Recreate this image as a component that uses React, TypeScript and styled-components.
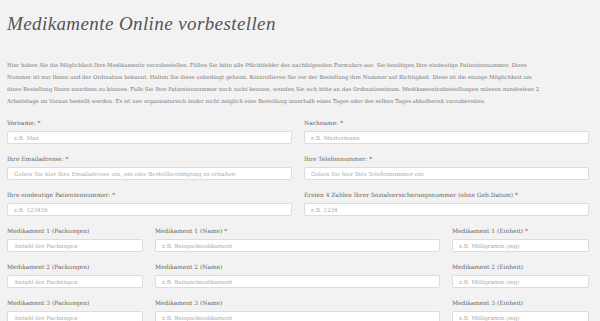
import * as React from 'react'
import styled, { createGlobalStyle } from 'styled-components'

const GlobalStyle = createGlobalStyle`
  html, body {
    margin: 0;
    padding: 0;
    background: #f2f2f2;
  }
`

const Page = styled.div`
  padding: 0 11px 0 7px;
  font-family: 'DejaVu Serif', 'Liberation Serif', serif;
  color: #666;
`

const Title = styled.h1`
  margin: 0;
  padding-top: 12px;
  font-family: 'Liberation Serif', serif;
  font-style: italic;
  font-weight: normal;
  font-size: 19px;
  line-height: 24px;
  color: #555;
  letter-spacing: 0.4px;
`

const Intro = styled.p`
  margin: 23px 0 11px;
  font-size: 5.4px;
  line-height: 12px;
  color: #777;
  white-space: nowrap;
`

const Form = styled.form`
  display: flex;
  flex-direction: column;
  gap: 10px;
`

const Row = styled.div<{ cols: string }>`
  display: grid;
  grid-template-columns: ${(p) => p.cols};
  column-gap: 12px;
`

const Field = styled.div`
  display: flex;
  flex-direction: column;
  gap: 3px;
  min-width: 0;
`

const Label = styled.label`
  font-size: 5.9px;
  line-height: 10px;
  color: #666;
  white-space: nowrap;
`

const Star = styled.span`
  color: #c0392b;
  margin-left: 2px;
`

const Input = styled.input`
  box-sizing: border-box;
  height: 13px;
  width: 100%;
  margin: 0;
  padding: 0 6px;
  border: 1px solid #dcdcdc;
  border-radius: 2px;
  background: #fff;
  font-family: 'DejaVu Serif', 'Liberation Serif', serif;
  font-size: 5.6px;
  color: #555;
  outline: none;

  &::placeholder {
    color: #aaa;
  }
`

interface FieldProps {
  label: string
  placeholder: string
  required?: boolean
}

const FormField = ({ label, placeholder, required }: FieldProps) => (
  <Field>
    <Label>
      {label}
      {required && <Star>*</Star>}
    </Label>
    <Input placeholder={placeholder} />
  </Field>
)

const personal: FieldProps[][] = [
  [
    { label: 'Vorname:', placeholder: 'z.B. Max', required: true },
    { label: 'Nachname:', placeholder: 'z.B. Mustermann', required: true },
  ],
  [
    { label: 'Ihre Emailadresse:', placeholder: 'Geben Sie hier Ihre Emailadresse ein, um eine Bestellbestätigung zu erhalten', required: true },
    { label: 'Ihre Telefonnummer:', placeholder: 'Geben Sie hier Ihre Telefonnummer ein', required: true },
  ],
  [
    { label: 'Ihre eindeutige Patientennummer:', placeholder: 'z.B. 123456', required: true },
    { label: 'Ersten 4 Zahlen Ihrer Sozialversicherungsnummer (ohne Geb.Datum)', placeholder: 'z.B. 1234', required: true },
  ],
]

const App = () => {
  return (
    <Page>
      <GlobalStyle />
      <Title>Medikamente Online vorbestellen</Title>
      <Intro>
        Hier haben Sie die Möglichkeit Ihre Medikamente vorzubestellen. Füllen Sie bitte alle Pflichtfelder des nachfolgenden Formulars aus. Sie benötigen Ihre eindeutige Patientennummer. Diese
        <br />
        Nummer ist nur Ihnen und der Ordination bekannt. Halten Sie diese unbedingt geheim. Kontrollieren Sie vor der Bestellung ihre Nummer auf Richtigkeit. Diese ist die einzige Möglichkeit um
        <br />
        diese Bestellung Ihnen zuordnen zu können. Falls Sie Ihre Patientennummer noch nicht kennen, wenden Sie sich bitte an das Ordinationsteam. Medikamentenbestellungen müssen mindestens 2
        <br />
        Arbeitstage im Voraus bestellt werden. Es ist uns organisatorisch leider nicht möglich eine Bestellung innerhalb eines Tages oder des selben Tages abholbereit vorzubereiten.
      </Intro>
      <Form>
        {personal.map((row, i) => (
          <Row key={i} cols="1fr 1fr">
            {row.map((f) => (
              <FormField key={f.label} {...f} />
            ))}
          </Row>
        ))}
        {[1, 2, 3].map((n) => (
          <Row key={n} cols="136px 1fr 137px">
            <FormField label={`Medikament ${n} (Packungen)`} placeholder="Anzahl der Packungen" />
            <FormField label={`Medikament ${n} (Name)`} placeholder="z.B. Beispielmedikament" required={n === 1} />
            <FormField label={`Medikament ${n} (Einheit)`} placeholder="z.B. Milligramm (mg)" required={n === 1} />
          </Row>
        ))}
      </Form>
    </Page>
  )
}

export default App
